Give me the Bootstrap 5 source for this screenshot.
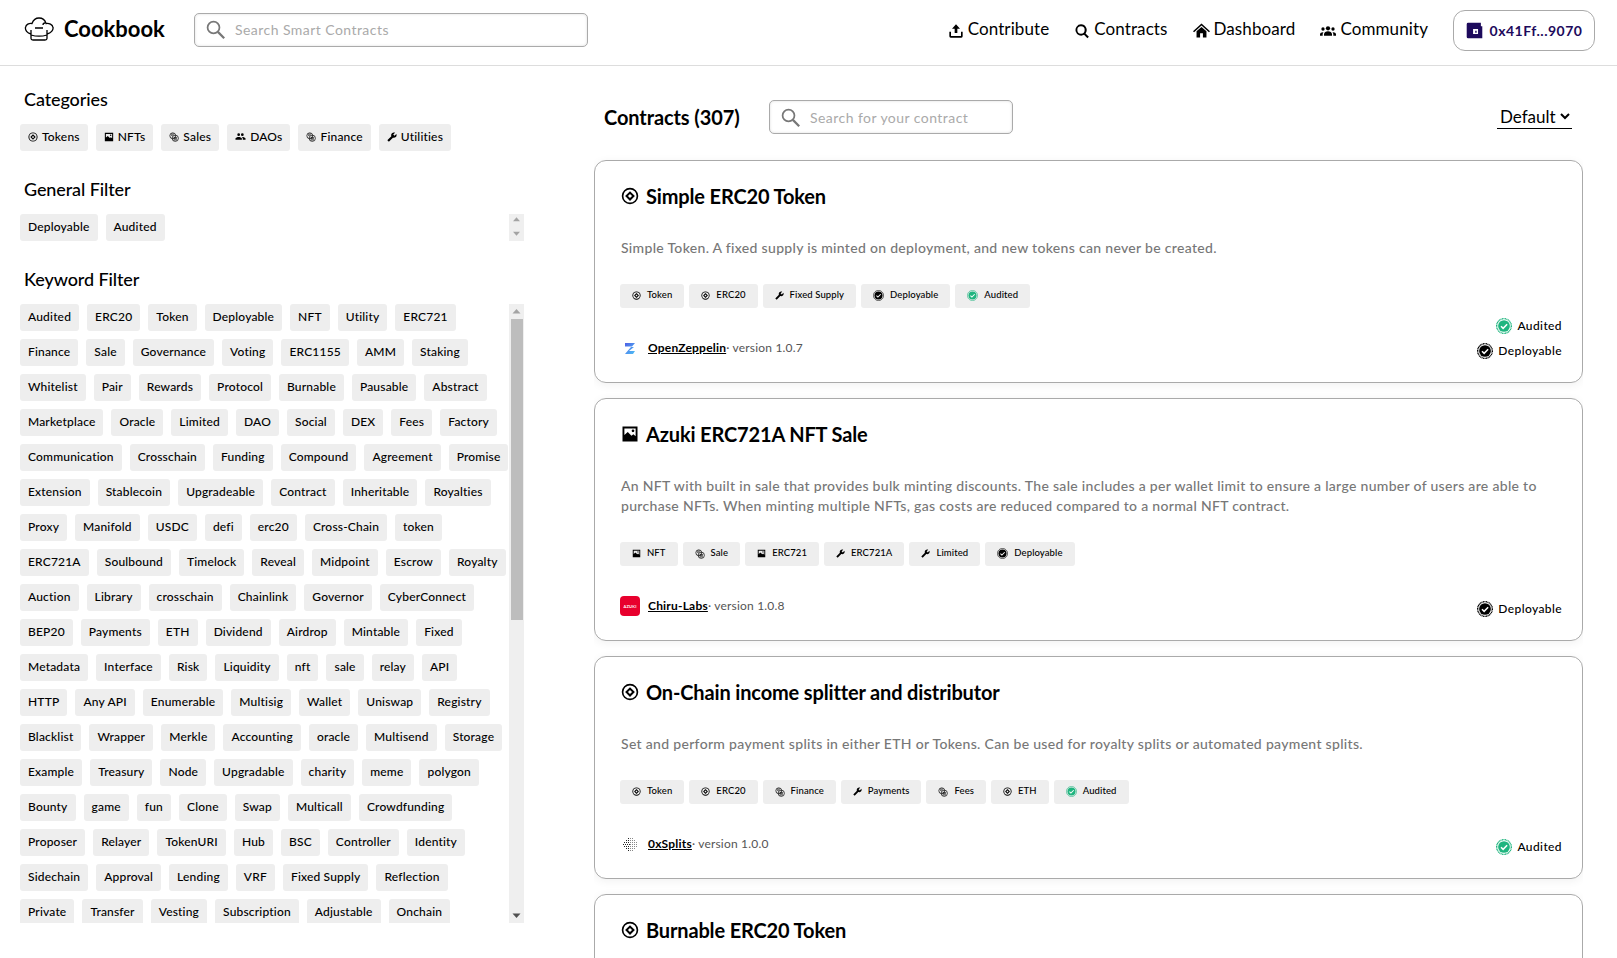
<!DOCTYPE html>
<html lang="en">
<head>
    <meta charset="UTF-8">
    <meta name="viewport" content="width=device-width, initial-scale=1">
    <title>Cookbook</title>
    <link href="https://cdn.jsdelivr.net/npm/bootstrap@5.3.3/dist/css/bootstrap.min.css" rel="stylesheet">
    <style>
        html, body { height: 100%; overflow: hidden; }
        body { font-family: Lato, "Noto Sans", sans-serif; color: #000; background: #fff; }
        .ck-ico { fill: currentColor; flex: none; }

        .ck-top { height: 66px; border-bottom: 1px solid #ddd; padding: 0 22px 0 24px; }
        .ck-logo { margin-top: -8px; flex: none; }
        .ck-brand { font-size: 22px; font-weight: 700; margin: -8px 0 0 10px; width: 130px; line-height: 1; }
        .ck-search { border: 1px solid #aaa; border-radius: 5px; height: 34px; padding-left: 11px; color: #aaa; font-size: 14px; letter-spacing: .45px; gap: 10px; box-shadow: inset 0 0 3px #ddd; }
        .ck-lens { color: #777; }
        .ck-search-top { width: 394px; margin-top: -6px; }
        .ck-search-list { width: 244px; margin-left: 30px; }
        .ck-links { gap: 25px; margin-top: -8px; font-size: 17px; letter-spacing: .1px; }
        .ck-links a { color: #000; text-decoration: none; gap: 4px; }
        .ck-links svg { margin-top: 4px; }
        .ck-wallet { border: 1px solid #aaa; border-radius: 12px; height: 41px; width: 142px; margin-left: 25px; margin-top: -5px; color: #1d0a5c; font-size: 14px; font-weight: 700; letter-spacing: .5px; gap: 7px; }

        .ck-main { height: calc(100vh - 66px); }
        .ck-side { width: 594px; flex: none; padding: 21px 0 0 20px; }
        .ck-side h2 { font-size: 18px; font-weight: 500; letter-spacing: -.1px; margin: 26px 0 13px 4px; line-height: 24px; }
        .ck-side h2:first-child { margin-top: 0; }
        .ck-chip { background: #eee; border-radius: 3px; height: 27px; padding: 0 8px 2px; font-size: 12px; font-weight: 500; letter-spacing: .18px; gap: 4px; display: inline-flex; align-items: center; white-space: nowrap; flex: none; }
        .ck-chiprow { gap: 8px; }
        .ck-box { width: 504px; }
        .ck-box-short { height: 27px; }
        .ck-box-long { height: 619px; }
        .ck-boxbody { width: 489px; overflow: hidden; }
        .ck-kwrows { row-gap: 8px; }
        .ck-sbar { width: 15px; background: #efefef; flex: none; }
        .ck-sarrow { height: 15px; flex: none; color: #a3a3a3; }
        .ck-sarrow-on { color: #505050; }
        .ck-sarrow-off { color: #a3a3a3; }
        .ck-sthumb { height: 301px; background: #bdbdbd; margin: 0 1px 0 2px; flex: none; }

        .ck-list { width: 989px; flex: none; overflow: hidden; }
        .ck-listhead { height: 94px; padding-top: 8px; flex: none; }
        .ck-listhead h1 { font-size: 20px; font-weight: 700; letter-spacing: -.1px; margin: 0 0 0 10px; width: 135px; white-space: nowrap; }
        .ck-sort { font-size: 17px; border-bottom: 1px solid #000; width: 75px; height: 24px; margin: 0 11px 0 0; line-height: 20px; padding-left: 3px; gap: 4px; flex: none; }
        .ck-card { border: 1px solid #aaa; border-radius: 12px; box-shadow: 0 2px 10px rgba(0, 0, 0, .06); padding: 20px 20px 0 26px; margin-bottom: 15px; flex: none; }
        .ck-card-cut { min-height: 223px; }
        .ck-card h3 { font-size: 20px; font-weight: 700; letter-spacing: -.15px; line-height: 30px; gap: 7px; margin: 0; }
        .ck-desc { font-size: 14px; letter-spacing: .31px; color: #777; line-height: 20px; margin: 27px 0 0 0; font-weight: 500; }
        .ck-tags { gap: 5px; margin: 26px 0 0 -1px; }
        .ck-tag { background: #eee; border-radius: 3px; height: 24px; padding: 0 12px 1px; font-size: 9.5px; font-weight: 500; letter-spacing: .1px; gap: 6px; display: inline-flex; align-items: center; white-space: nowrap; }
        .ck-foot { height: 74px; padding-bottom: 19px; margin-left: -1px; }
        .ck-author { height: 20px; margin-bottom: 5px; font-size: 12px; letter-spacing: .2px; color: #555; gap: 8px; }
        .ck-author a { color: #000; font-weight: 700; text-decoration: underline; }
        .ck-badge { height: 25px; font-size: 12px; font-weight: 500; letter-spacing: .4px; gap: 5px; }
    </style>
</head>
<body>
    <svg width="0" height="0" class="position-absolute">
        <symbol id="i-token" viewBox="0 0 24 24"><path fill-rule="evenodd" d="M12 1a11 11 0 1 0 0 22 11 11 0 0 0 0-22zm0 2.200a8.800 8.800 0 1 1 0 17.600 8.800 8.800 0 0 1 0-17.600zM12 5.500L5.500 12l6.500 6.500 6.500-6.500zM12 9.300l2.700 2.700-2.700 2.700L9.300 12z"/></symbol>
        <symbol id="i-image" viewBox="0 0 24 24"><path fill-rule="evenodd" d="M2 2h20v20H2zM4.500 4.500v8.800l4.500-4 5 5 2.500-2 3 2.700V4.500zM16 6a1.800 1.800 0 1 1 0 3.600A1.800 1.800 0 0 1 16 6z"/></symbol>
        <symbol id="i-coins" viewBox="0 0 24 24"><g fill="none" stroke="currentColor" stroke-width="1.700"><circle cx="9" cy="9" r="7"/><circle cx="15" cy="15" r="7.500"/><path d="M11 13h8M11 16h8M11 19h8M5 8h4M5 5h7"/></g></symbol>
        <symbol id="i-wrench" viewBox="0 0 24 24"><path transform="matrix(-1 0 0 1 24 0)" d="M22.700 19l-9.100-9.100c.9-2.300.4-5-1.500-6.900-2-2-5-2.400-7.400-1.300L9 6 6 9 1.600 4.700C.4 7.100.9 10.100 2.900 12.100c1.900 1.900 4.600 2.400 6.900 1.500l9.100 9.100c.4.4 1 .4 1.400 0l2.300-2.300c.5-.4.5-1.100.1-1.400z"/></symbol>
        <symbol id="i-people" viewBox="0 0 24 24"><path d="M16 11a3 3 0 1 0 0-6 3 3 0 0 0 0 6zm-8 0a3 3 0 1 0 0-6 3 3 0 0 0 0 6zm0 2c-2.300 0-7 1.200-7 3.500V19h14v-2.500C15 14.200 10.300 13 8 13zm8 0h-1c1.200.8 2 2 2 3.500V19h6v-2.500c0-2.300-4.700-3.500-7-3.500z"/></symbol>
        <symbol id="i-group" viewBox="0 0 24 24"><circle cx="12" cy="8" r="3.200"/><circle cx="4.500" cy="9" r="2.500"/><circle cx="19.500" cy="9" r="2.500"/><path d="M6 19v-2c0-3 3-4.500 6-4.500s6 1.500 6 4.500v2zM0 19v-2c0-2 2-3.300 4.500-3.300h.7C4.500 14.500 4 15.700 4 17v2zM24 19v-2c0-2-2-3.300-4.500-3.300h-.7c.7.800 1.200 2 1.200 3.300v2z"/></symbol>
        <symbol id="i-upload" viewBox="0 0 24 24"><path d="M12 2l6 6.500h-4V15h-4V8.500H6z"/><path d="M2 13h2.500v6.500h15V13H22v7a2 2 0 0 1-2 2H4a2 2 0 0 1-2-2z"/></symbol>
        <symbol id="i-find" viewBox="0 0 24 24"><path fill-rule="evenodd" d="M10.500 2a8.500 8.500 0 0 1 6.800 13.600l5 5-2.200 2.200-5-5A8.500 8.500 0 1 1 10.500 2zm0 3a5.500 5.500 0 1 0 0 11 5.500 5.500 0 0 0 0-11z"/></symbol>
        <symbol id="i-home" viewBox="0 0 24 24"><path d="M10 22v-6h4v6h5v-9l-7-6-7 6v9z"/><path d="M12 2L0 13l1.500 1.500L12 5l10.500 9.500L24 13z"/></symbol>
        <symbol id="i-lens" viewBox="0 0 24 24"><g fill="none" stroke="currentColor" stroke-width="2.200"><circle cx="9.500" cy="9.500" r="7.500"/><path d="M15 15l8 8" stroke-width="2.800"/></g></symbol>
        <symbol id="i-wallet" viewBox="0 0 24 24"><path fill-rule="evenodd" d="M3 1h18v5h2v17H3a2 2 0 0 1-2-2V3a2 2 0 0 1 2-2zm7 9v7h7v-7zm3 2.500h2V15h-2z"/></symbol>
        <symbol id="i-check" viewBox="0 0 24 24"><circle cx="12" cy="12" r="11" fill="none" stroke="currentColor" stroke-width="2" stroke-dasharray="1.600 .7"/><circle cx="12" cy="12" r="8.800"/><path d="M7.500 12.300l3.200 3.200 6-6.200" fill="none" stroke="#fff" stroke-width="2.200"/></symbol>
        <symbol id="i-up" viewBox="0 0 15 15"><path d="M3.500 9.500h8L7.500 5z"/></symbol>
        <symbol id="i-down" viewBox="0 0 15 15"><path d="M3.500 5.500h8L7.500 10z"/></symbol>
    </svg>

    <header class="ck-top d-flex align-items-center">
        <svg class="ck-logo" width="30" height="24" viewBox="0 0 30 24" fill="none" stroke="#000" stroke-width="1.300"><path d="M7 17C3 16 1 13 1.500 10.500 2 7.500 5 6 8 6.500 9.500 2.500 13 1 15 1c3 0 6 2 7 5.500 3-.5 6.500 1 7 4 .5 2.500-2 5.500-6 6.500"/><path d="M7 13v8.500c0 1 1 1.500 2 1.500h12c1 0 2-.5 2-1.500V13M7 18c5 1.500 11 1.500 16 0M11 11h8M21 6c-1 0-2 1-2 2"/></svg>
        <span class="ck-brand">Cookbook</span>
        <div class="ck-search ck-search-top d-flex align-items-center">
            <svg class="ck-ico ck-lens" width="19" height="19"><use href="#i-lens"/></svg>
            <span>Search Smart Contracts</span>
        </div>
        <nav class="ck-links d-flex align-items-center ms-auto">
            <a class="d-flex align-items-center" href="#"><svg class="ck-ico" width="16" height="16"><use href="#i-upload"/></svg>Contribute</a>
            <a class="d-flex align-items-center" href="#"><svg class="ck-ico" width="16" height="16"><use href="#i-find"/></svg>Contracts</a>
            <a class="d-flex align-items-center" href="#"><svg class="ck-ico" width="17" height="17"><use href="#i-home"/></svg>Dashboard</a>
            <a class="d-flex align-items-center" href="#"><svg class="ck-ico" width="16" height="16"><use href="#i-group"/></svg>Community</a>
        </nav>
        <div class="ck-wallet d-flex align-items-center justify-content-center">
            <svg class="ck-ico" width="17" height="17"><use href="#i-wallet"/></svg>
            <span>0x41Ff...9070</span>
        </div>
    </header>

    <div class="ck-main d-flex">
        <aside class="ck-side">
            <h2>Categories</h2>
            <div class="d-flex ck-chiprow">
                <span class="ck-chip"><svg class="ck-ico" width="10" height="10"><use href="#i-token"/></svg>Tokens</span>
                <span class="ck-chip"><svg class="ck-ico" width="10" height="10"><use href="#i-image"/></svg>NFTs</span>
                <span class="ck-chip"><svg class="ck-ico" width="10" height="10"><use href="#i-coins"/></svg>Sales</span>
                <span class="ck-chip"><svg class="ck-ico" width="11" height="11"><use href="#i-people"/></svg>DAOs</span>
                <span class="ck-chip"><svg class="ck-ico" width="10" height="10"><use href="#i-coins"/></svg>Finance</span>
                <span class="ck-chip"><svg class="ck-ico" width="10" height="10"><use href="#i-wrench"/></svg>Utilities</span>
            </div>

            <h2>General Filter</h2>
            <div class="ck-box ck-box-short d-flex">
                <div class="ck-boxbody flex-grow-1">
                    <div class="d-flex ck-chiprow">
                        <span class="ck-chip">Deployable</span>
                        <span class="ck-chip">Audited</span>
                    </div>
                </div>
                <div class="ck-sbar d-flex flex-column justify-content-between">
                    <svg class="ck-ico ck-sarrow-off" width="15" height="13" viewBox="0 1 15 13"><use href="#i-up"/></svg>
                    <svg class="ck-ico ck-sarrow-off" width="15" height="13" viewBox="0 1 15 13"><use href="#i-down"/></svg>
                </div>
            </div>

            <h2>Keyword Filter</h2>
            <div class="ck-box ck-box-long d-flex">
                <div id="kw" class="ck-boxbody d-flex flex-column ck-kwrows flex-grow-1"></div>
                <div class="ck-sbar d-flex flex-column">
                    <svg class="ck-ico ck-sarrow" width="15" height="15"><use href="#i-up"/></svg>
                    <div class="ck-sthumb"></div>
                    <svg class="ck-ico ck-sarrow ck-sarrow-on mt-auto" width="15" height="15"><use href="#i-down"/></svg>
                </div>
            </div>
        </aside>

        <main class="ck-list d-flex flex-column">
            <div class="ck-listhead d-flex align-items-center">
                <h1>Contracts (307)</h1>
                <div class="ck-search ck-search-list d-flex align-items-center">
                    <svg class="ck-ico ck-lens" width="19" height="19"><use href="#i-lens"/></svg>
                    <span>Search for your contract</span>
                </div>
                <div class="ck-sort d-flex align-items-center ms-auto">Default
                    <svg width="10" height="7" viewBox="0 0 10 7" fill="none" stroke="#000" stroke-width="2" class="flex-shrink-0"><path d="M1 1l4 4 4-4"/></svg>
                </div>
            </div>

            <article class="ck-card">
                <h3 class="d-flex align-items-center"><svg class="ck-ico" width="18" height="18"><use href="#i-token"/></svg>Simple ERC20 Token</h3>
                <p class="ck-desc">Simple Token. A fixed supply is minted on deployment, and new tokens can never be created.</p>
                <div class="d-flex ck-tags">
                    <span class="ck-tag"><svg class="ck-ico" width="9" height="9"><use href="#i-token"/></svg>Token</span>
                    <span class="ck-tag"><svg class="ck-ico" width="9" height="9"><use href="#i-token"/></svg>ERC20</span>
                    <span class="ck-tag"><svg class="ck-ico" width="9" height="9"><use href="#i-wrench"/></svg>Fixed Supply</span>
                    <span class="ck-tag"><svg class="ck-ico" width="11" height="11"><use href="#i-check"/></svg>Deployable</span>
                    <span class="ck-tag"><svg class="ck-ico" width="11" height="11" style="color:#1fb57f"><use href="#i-check"/></svg>Audited</span>
                </div>
                <div class="ck-foot d-flex justify-content-between align-items-end">
                    <div class="ck-author d-flex align-items-center">
                        <svg width="20" height="20" viewBox="0 0 20 20"><defs><linearGradient id="oz" x1="0" y1="0" x2="1" y2="1"><stop offset="0" stop-color="#4e5ee4"/><stop offset="1" stop-color="#4fc3f7"/></linearGradient></defs><path fill="url(#oz)" d="M5 5h10l-3 3.500H5zM11 9h3l-5 4h6l-2 3H5z"/></svg>
                        <span><a href="#">OpenZeppelin</a>· version 1.0.7</span>
                    </div>
                    <div class="d-flex flex-column align-items-end">
                        <div class="ck-badge d-flex align-items-center"><svg class="ck-ico" width="16" height="16" style="color:#1fb57f"><use href="#i-check"/></svg>Audited</div>
                        <div class="ck-badge d-flex align-items-center"><svg class="ck-ico" width="16" height="16"><use href="#i-check"/></svg>Deployable</div>
                    </div>
                </div>
            </article>

            <article class="ck-card">
                <h3 class="d-flex align-items-center"><svg class="ck-ico" width="18" height="18"><use href="#i-image"/></svg>Azuki ERC721A NFT Sale</h3>
                <p class="ck-desc">An NFT with built in sale that provides bulk minting discounts. The sale includes a per wallet limit to ensure a large number of users are able to purchase NFTs. When minting multiple NFTs, gas costs are reduced compared to a normal NFT contract.</p>
                <div class="d-flex ck-tags">
                    <span class="ck-tag"><svg class="ck-ico" width="9" height="9"><use href="#i-image"/></svg>NFT</span>
                    <span class="ck-tag"><svg class="ck-ico" width="10" height="10"><use href="#i-coins"/></svg>Sale</span>
                    <span class="ck-tag"><svg class="ck-ico" width="9" height="9"><use href="#i-image"/></svg>ERC721</span>
                    <span class="ck-tag"><svg class="ck-ico" width="9" height="9"><use href="#i-wrench"/></svg>ERC721A</span>
                    <span class="ck-tag"><svg class="ck-ico" width="9" height="9"><use href="#i-wrench"/></svg>Limited</span>
                    <span class="ck-tag"><svg class="ck-ico" width="11" height="11"><use href="#i-check"/></svg>Deployable</span>
                </div>
                <div class="ck-foot d-flex justify-content-between align-items-end">
                    <div class="ck-author d-flex align-items-center">
                        <svg width="20" height="20" viewBox="0 0 20 20"><rect width="20" height="20" rx="4" fill="#e8002d"/><text x="10" y="11.500" text-anchor="middle" font-size="4" font-weight="700" fill="#fff" font-family="Lato, sans-serif">AZUKI</text></svg>
                        <span><a href="#">Chiru-Labs</a>· version 1.0.8</span>
                    </div>
                    <div class="ck-badge d-flex align-items-center"><svg class="ck-ico" width="16" height="16"><use href="#i-check"/></svg>Deployable</div>
                </div>
            </article>

            <article class="ck-card">
                <h3 class="d-flex align-items-center"><svg class="ck-ico" width="18" height="18"><use href="#i-token"/></svg>On-Chain income splitter and distributor</h3>
                <p class="ck-desc">Set and perform payment splits in either ETH or Tokens. Can be used for royalty splits or automated payment splits.</p>
                <div class="d-flex ck-tags">
                    <span class="ck-tag"><svg class="ck-ico" width="9" height="9"><use href="#i-token"/></svg>Token</span>
                    <span class="ck-tag"><svg class="ck-ico" width="9" height="9"><use href="#i-token"/></svg>ERC20</span>
                    <span class="ck-tag"><svg class="ck-ico" width="10" height="10"><use href="#i-coins"/></svg>Finance</span>
                    <span class="ck-tag"><svg class="ck-ico" width="9" height="9"><use href="#i-wrench"/></svg>Payments</span>
                    <span class="ck-tag"><svg class="ck-ico" width="10" height="10"><use href="#i-coins"/></svg>Fees</span>
                    <span class="ck-tag"><svg class="ck-ico" width="9" height="9"><use href="#i-token"/></svg>ETH</span>
                    <span class="ck-tag"><svg class="ck-ico" width="11" height="11" style="color:#1fb57f"><use href="#i-check"/></svg>Audited</span>
                </div>
                <div class="ck-foot d-flex justify-content-between align-items-end">
                    <div class="ck-author d-flex align-items-center">
                        <svg width="20" height="20" viewBox="0 0 20 20" fill="none" stroke-width="1" stroke-dasharray="1 1"><path stroke="#222" d="M3 10.500h7M4 8.500h6M4 12.500h6M6 6.500h4M6 14.500h4M8 4.500h2M8 16.500h2"/><path stroke="#888" d="M10 10.500h8M10 8.500h7M10 12.500h7M10 6.500h5M10 14.500h5M10 4.500h3M10 16.500h3"/></svg>
                        <span><a href="#">0xSplits</a>· version 1.0.0</span>
                    </div>
                    <div class="ck-badge d-flex align-items-center"><svg class="ck-ico" width="16" height="16" style="color:#1fb57f"><use href="#i-check"/></svg>Audited</div>
                </div>
            </article>

            <article class="ck-card ck-card-cut">
                <h3 class="d-flex align-items-center"><svg class="ck-ico" width="18" height="18"><use href="#i-token"/></svg>Burnable ERC20 Token</h3>
            </article>
        </main>
    </div>

    <script src="https://cdn.jsdelivr.net/npm/bootstrap@5.3.3/dist/js/bootstrap.bundle.min.js"></script>
    <script>
        const rows = [
            ['Audited', 'ERC20', 'Token', 'Deployable', 'NFT', 'Utility', 'ERC721'],
            ['Finance', 'Sale', 'Governance', 'Voting', 'ERC1155', 'AMM', 'Staking'],
            ['Whitelist', 'Pair', 'Rewards', 'Protocol', 'Burnable', 'Pausable', 'Abstract'],
            ['Marketplace', 'Oracle', 'Limited', 'DAO', 'Social', 'DEX', 'Fees', 'Factory'],
            ['Communication', 'Crosschain', 'Funding', 'Compound', 'Agreement', 'Promise'],
            ['Extension', 'Stablecoin', 'Upgradeable', 'Contract', 'Inheritable', 'Royalties'],
            ['Proxy', 'Manifold', 'USDC', 'defi', 'erc20', 'Cross-Chain', 'token'],
            ['ERC721A', 'Soulbound', 'Timelock', 'Reveal', 'Midpoint', 'Escrow', 'Royalty'],
            ['Auction', 'Library', 'crosschain', 'Chainlink', 'Governor', 'CyberConnect'],
            ['BEP20', 'Payments', 'ETH', 'Dividend', 'Airdrop', 'Mintable', 'Fixed'],
            ['Metadata', 'Interface', 'Risk', 'Liquidity', 'nft', 'sale', 'relay', 'API'],
            ['HTTP', 'Any API', 'Enumerable', 'Multisig', 'Wallet', 'Uniswap', 'Registry'],
            ['Blacklist', 'Wrapper', 'Merkle', 'Accounting', 'oracle', 'Multisend', 'Storage'],
            ['Example', 'Treasury', 'Node', 'Upgradable', 'charity', 'meme', 'polygon'],
            ['Bounty', 'game', 'fun', 'Clone', 'Swap', 'Multicall', 'Crowdfunding'],
            ['Proposer', 'Relayer', 'TokenURI', 'Hub', 'BSC', 'Controller', 'Identity'],
            ['Sidechain', 'Approval', 'Lending', 'VRF', 'Fixed Supply', 'Reflection'],
            ['Private', 'Transfer', 'Vesting', 'Subscription', 'Adjustable', 'Onchain']
        ];
        document.getElementById('kw').innerHTML = rows.map(row =>
            `<div class="d-flex ck-chiprow flex-shrink-0">${row.map(k => `<span class="ck-chip">${k}</span>`).join('')}</div>`
        ).join('');
    </script>
</body>
</html>
